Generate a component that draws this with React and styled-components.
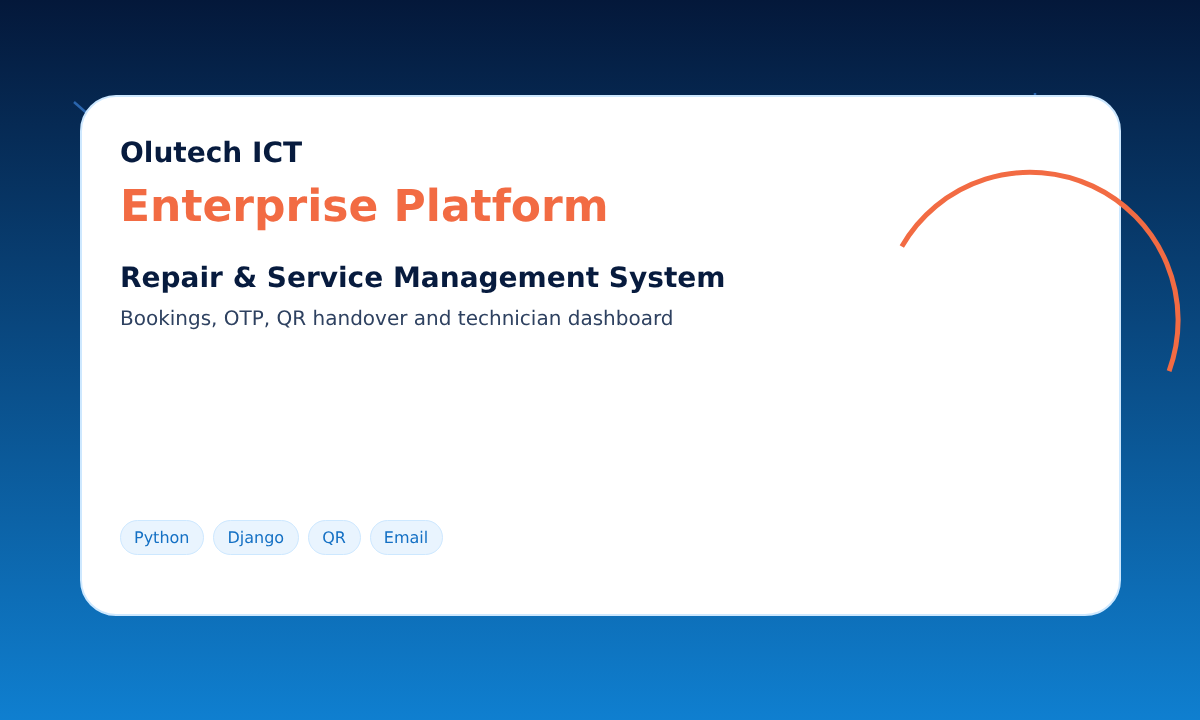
import styled, { createGlobalStyle } from "styled-components";

const GlobalStyle = createGlobalStyle`
  html, body {
    margin: 0;
    padding: 0;
  }
  body {
    font-family: "DejaVu Sans", sans-serif;
    text-rendering: geometricPrecision;
  }
`;

const Page = styled.div`
  position: relative;
  width: 1200px;
  height: 720px;
  overflow: hidden;
  padding: 95px 79px 0 80px;
  box-sizing: border-box;
  background: linear-gradient(180deg, #04183a 0%, #0f7fd0 100%);
`;

const Card = styled.div`
  position: relative;
  height: 521px;
  box-sizing: border-box;
  padding: 39px 38px 59px;
  display: flex;
  flex-direction: column;
  background: #fff;
  border: 2px solid #cde8ff;
  border-radius: 36px;
  will-change: transform;
`;

const Brand = styled.div`
  font-size: 28px;
  line-height: 34px;
  font-weight: 700;
  color: #071b3e;
`;

const Headline = styled.h1`
  margin: 9px 0 0;
  font-size: 44px;
  line-height: 56px;
  font-weight: 700;
  color: #f26b43;
`;

const Title = styled.h2`
  margin: 26px 0 0;
  font-size: 28px;
  line-height: 34px;
  font-weight: 700;
  color: #071b3e;
`;

const Subtitle = styled.p`
  margin: 11px 0 0;
  font-size: 20px;
  line-height: 24px;
  color: #2e4160;
`;

const Tags = styled.div`
  margin-top: auto;
  display: flex;
  gap: 9px;
`;

const Tag = styled.span`
  height: 35px;
  box-sizing: border-box;
  padding: 0 14px 0 13px;
  display: flex;
  align-items: center;
  font-size: 16px;
  color: #1470c4;
  background: #e9f4fe;
  border: 1px solid #cde8ff;
  border-radius: 18px;
`;

const Decor = styled.svg`
  position: absolute;
  top: 0;
  left: 0;
  pointer-events: none;
`;

const tags = ["Python", "Django", "QR", "Email"];

export default function App() {
  return (
    <>
      <GlobalStyle />
      <Page>
        <Decor width="1200" height="720" viewBox="0 0 1200 720">
          <path d="M74 102L90 116" stroke="#2a65ad" strokeWidth="2.5" fill="none" />
          <path d="M1035 93V97" stroke="#2a65ad" strokeWidth="2.5" fill="none" />
        </Decor>
        <Card>
          <Brand>Olutech ICT</Brand>
          <Headline>Enterprise Platform</Headline>
          <Title>Repair &amp; Service Management System</Title>
          <Subtitle>Bookings, OTP, QR handover and technician dashboard</Subtitle>
          <Tags>
            {tags.map((tag) => (
              <Tag key={tag}>{tag}</Tag>
            ))}
          </Tags>
        </Card>
        <Decor width="1200" height="720" viewBox="0 0 1200 720">
          <path
            d="M901.8 246.5A148 148 0 0 1 1169.1 371.1"
            stroke="#f26b43"
            strokeWidth="5"
            fill="none"
          />
        </Decor>
      </Page>
    </>
  );
}
